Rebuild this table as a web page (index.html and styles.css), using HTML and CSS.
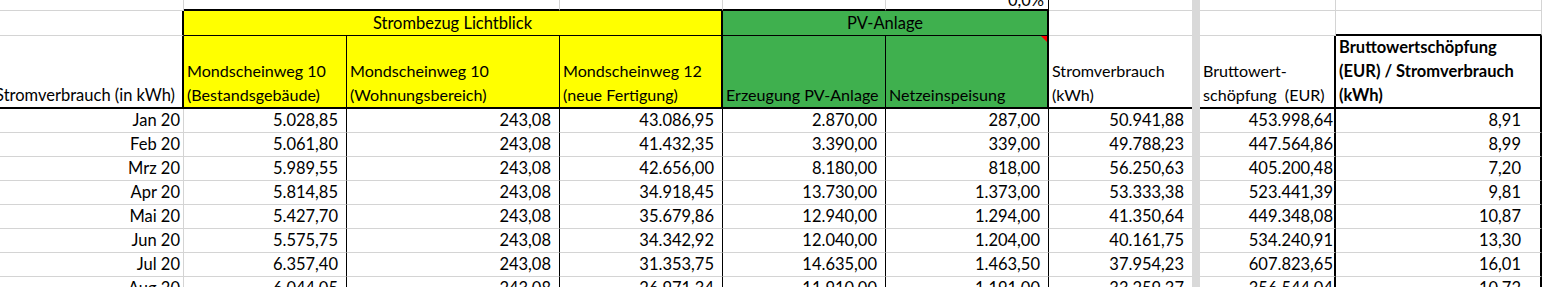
FILE: index.html
```html
<!DOCTYPE html>
<html lang="de">
<head>
<meta charset="utf-8">
<title>Stromverbrauch</title>
<link rel="stylesheet" href="styles.css">
</head>
<body>
<div class="sheet">
  <div class="bar"></div>

  <!-- row 1 -->
  <div class="c"></div>
  <div class="c nr tb"></div>
  <div class="c tb"></div>
  <div class="c tb"></div>
  <div class="c tb"></div>
  <div class="c tb rb1 top"><span class="pct">0,0%</span></div>
  <div class="c nr"></div>
  <div class="c"></div>
  <div class="c"></div>

  <!-- row 2 -->
  <div class="c rb2"></div>
  <div class="c yel bb1 rb2 title span3">Strombezug Lichtblick</div>
  <div class="c grn bb1 rb2 title span2">PV-Anlage</div>
  <div class="c nr"></div>
  <div class="c"></div>
  <div class="c bb2"></div>

  <!-- row 3 -->
  <div class="c rb2 bb2 h hr">Stromverbrauch (in kWh)</div>
  <div class="c yel rb1 bb2 h"><span>Mondscheinweg 10</span><span>(Bestandsgebäude)</span></div>
  <div class="c yel rb1 bb2 h"><span>Mondscheinweg 10</span><span>(Wohnungsbereich)</span></div>
  <div class="c yel rb2 bb2 h"><span>Mondscheinweg 12</span><span>(neue Fertigung)</span></div>
  <div class="c grn rb1 bb2 h"><span>Erzeugung PV-Anlage</span></div>
  <div class="c grn rb2 bb2 h note"><span>Netzeinspeisung</span><i class="flag"></i></div>
  <div class="c nr bb2 h"><span>Stromverbrauch</span><span>(kWh)</span></div>
  <div class="c rb2 bb2 h"><span>Bruttowert-</span><span>schöpfung&nbsp; (EUR)</span></div>
  <div class="c rb2 bb2 h bold"><span>Bruttowertschöpfung</span><span>(EUR) / Stromverbrauch</span><span>(kWh)</span></div>

  <!-- data rows -->
  <div class="c d pa">Jan 20</div><div class="c d rb1 pm">5.028,85</div><div class="c d rb1 pm">243,08</div><div class="c d rb1 pm">43.086,95</div><div class="c d rb1 pm">2.870,00</div><div class="c d rb1 pm">287,00</div><div class="c d nr pm">50.941,88</div><div class="c d rb2 ph">453.998,64</div><div class="c d rb2 pi">8,91</div>
  <div class="c d pa">Feb 20</div><div class="c d rb1 pm">5.061,80</div><div class="c d rb1 pm">243,08</div><div class="c d rb1 pm">41.432,35</div><div class="c d rb1 pm">3.390,00</div><div class="c d rb1 pm">339,00</div><div class="c d nr pm">49.788,23</div><div class="c d rb2 ph">447.564,86</div><div class="c d rb2 pi">8,99</div>
  <div class="c d pa">Mrz 20</div><div class="c d rb1 pm">5.989,55</div><div class="c d rb1 pm">243,08</div><div class="c d rb1 pm">42.656,00</div><div class="c d rb1 pm">8.180,00</div><div class="c d rb1 pm">818,00</div><div class="c d nr pm">56.250,63</div><div class="c d rb2 ph">405.200,48</div><div class="c d rb2 pi">7,20</div>
  <div class="c d pa">Apr 20</div><div class="c d rb1 pm">5.814,85</div><div class="c d rb1 pm">243,08</div><div class="c d rb1 pm">34.918,45</div><div class="c d rb1 pm">13.730,00</div><div class="c d rb1 pm">1.373,00</div><div class="c d nr pm">53.333,38</div><div class="c d rb2 ph">523.441,39</div><div class="c d rb2 pi">9,81</div>
  <div class="c d pa">Mai 20</div><div class="c d rb1 pm">5.427,70</div><div class="c d rb1 pm">243,08</div><div class="c d rb1 pm">35.679,86</div><div class="c d rb1 pm">12.940,00</div><div class="c d rb1 pm">1.294,00</div><div class="c d nr pm">41.350,64</div><div class="c d rb2 ph">449.348,08</div><div class="c d rb2 pi">10,87</div>
  <div class="c d pa">Jun 20</div><div class="c d rb1 pm">5.575,75</div><div class="c d rb1 pm">243,08</div><div class="c d rb1 pm">34.342,92</div><div class="c d rb1 pm">12.040,00</div><div class="c d rb1 pm">1.204,00</div><div class="c d nr pm">40.161,75</div><div class="c d rb2 ph">534.240,91</div><div class="c d rb2 pi">13,30</div>
  <div class="c d pa">Jul 20</div><div class="c d rb1 pm">6.357,40</div><div class="c d rb1 pm">243,08</div><div class="c d rb1 pm">31.353,75</div><div class="c d rb1 pm">14.635,00</div><div class="c d rb1 pm">1.463,50</div><div class="c d nr pm">37.954,23</div><div class="c d rb2 ph">607.823,65</div><div class="c d rb2 pi">16,01</div>
  <div class="c d pa">Aug 20</div><div class="c d rb1 pm">6.044,05</div><div class="c d rb1 pm">243,08</div><div class="c d rb1 pm">26.971,34</div><div class="c d rb1 pm">11.910,00</div><div class="c d rb1 pm">1.191,00</div><div class="c d nr pm">33.259,37</div><div class="c d rb2 ph">356.544,04</div><div class="c d rb2 pi">10,72</div>
</div>
</body>
</html>
```

FILE: styles.css
```css
html, body {
  margin: 0;
  padding: 0;
  background: #ffffff;
  overflow: hidden;
}

body {
  font-family: Lato, "Liberation Sans", sans-serif;
  font-size: 16.5px;
  color: #000000;
}

.sheet {
  display: grid;
  grid-template-columns: 184px 163px 213px 163px 163px 163px 143px 8px 136px 206px;
  grid-template-rows: 11px 25px 73px repeat(8, 24px);
  width: 1542px;
  height: 287px;
  overflow: hidden;
}

.bar {
  grid-column: 8;
  grid-row: 1 / -1;
  background: #d9d9d9;
}

.c {
  box-sizing: border-box;
  border-right: 1px solid #d4d4d4;
  border-bottom: 1px solid #d4d4d4;
  overflow: hidden;
  white-space: nowrap;
  min-width: 0;
}

/* border modifiers */
.nr { border-right: none; }
.rb1 { border-right: 1px solid #000000; }
.rb2 { border-right: 2px solid #000000; }
.bb1 { border-bottom: 1px solid #000000; }
.bb2 { border-bottom: 2px solid #000000; }
.tb { border-bottom: 2px solid #000000; }

.span3 { grid-column: span 3; }
.span2 { grid-column: span 2; }

.yel { background: #ffff00; }
.grn { background: #3fb04e; }

/* row 1 overflow percentage */
.top {
  text-align: right;
  padding-right: 4px;
}
.pct {
  display: block;
  line-height: 24px;
  margin-top: -12px;
}

/* row 2 group titles */
.title {
  line-height: 24px;
  text-align: center;
}

/* row 3 column headers */
.h {
  display: flex;
  flex-direction: column;
  justify-content: flex-end;
  line-height: 24px;
  padding-left: 3px;
  font-size: 16.1px;
}
.hr {
  align-items: flex-end;
  padding-left: 0;
  padding-right: 7px;
  font-size: 16.5px;
}
.bold { font-weight: 700; font-size: 16.5px; }

.note { position: relative; }
.flag {
  position: absolute;
  top: 0;
  right: 0;
  width: 0;
  height: 0;
  border-top: 6px solid #ff0000;
  border-left: 6px solid transparent;
}

/* data cells */
.d {
  line-height: 23px;
  text-align: right;
}
.pa { padding-right: 3px; }
.pm { padding-right: 8px; }
.ph { padding-right: 1px; }
.pi { padding-right: 19px; }
```
